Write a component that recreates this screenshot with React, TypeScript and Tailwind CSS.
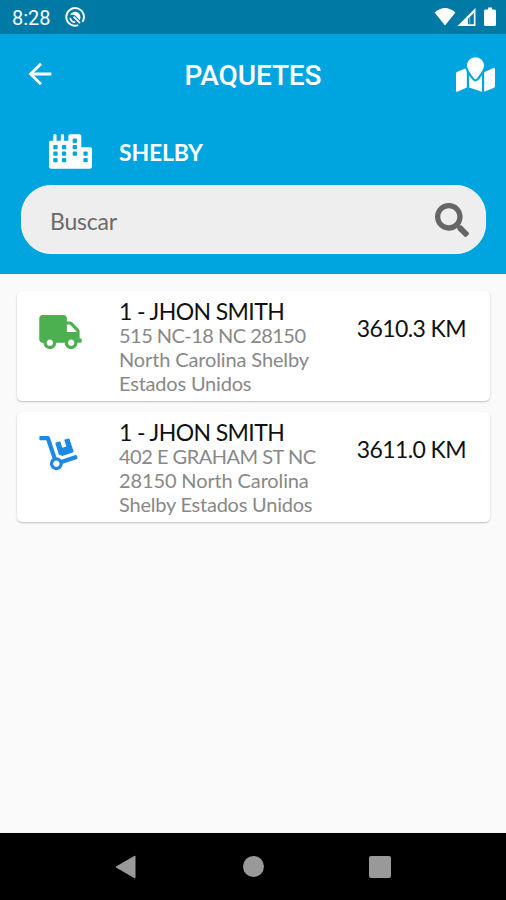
import React from "react";
import { FaCity, FaDolly, FaMapMarked, FaSearch, FaTruck } from "react-icons/fa";
import { MdArrowBack } from "react-icons/md";

interface AddressLine {
  text: string;
  tracking: string;
}

interface PackageItem {
  id: number;
  name: string;
  address: AddressLine[];
  distance: string;
  status: "truck" | "dolly";
}

const packages: PackageItem[] = [
  {
    id: 1,
    name: "1 - JHON SMITH",
    address: [
      { text: "515 NC-18 NC 28150", tracking: "tracking-[-0.53px]" },
      { text: "North Carolina Shelby", tracking: "tracking-[-0.13px]" },
      { text: "Estados Unidos", tracking: "tracking-[-0.2px]" },
    ],
    distance: "3610.3 KM",
    status: "truck",
  },
  {
    id: 2,
    name: "1 - JHON SMITH",
    address: [
      { text: "402 E GRAHAM ST NC", tracking: "tracking-[-0.5px]" },
      { text: "28150 North Carolina", tracking: "tracking-[-0.13px]" },
      { text: "Shelby Estados Unidos", tracking: "tracking-[-0.23px]" },
    ],
    distance: "3611.0 KM",
    status: "dolly",
  },
];

function StatusBar() {
  return (
    <div className="flex h-[34px] items-center bg-[#0079a5] pl-3 pr-[9px] font-['Roboto',sans-serif] text-white">
      <span className="w-[53px] pt-[3px] text-[20px] leading-[31px]">8:28</span>
      <svg className="h-5 w-5" viewBox="0 0 20 20" fill="none">
        <path d="M13.2 18.1A8.8 8.8 0 1 1 17.4 14.8" stroke="white" strokeWidth="1.9" />
        <path d="M5 8.2C6.4 5 10 3.9 12.8 5.6c2.8 1.7 3.2 4.9 2 7.6L11 9.2C9.3 7.6 7 7.4 5 8.2Z" fill="white" />
        <path d="M5.2 10.8c.5 2.6 2.4 4.2 5 4.4M8.6 9.6l6.4 6.6" stroke="white" strokeWidth="1.7" />
      </svg>
      <div className="ml-auto flex items-center">
        <svg className="mr-px h-5 w-[22px]" viewBox="0 0 22 20">
          <path d="M.6 5.6Q11-3.4 21.4 5.6L11 18.6Z" fill="white" />
        </svg>
        <svg className="h-5 w-[19px]" viewBox="0 0 19 20">
          <path d="M18.5 1v18H.5ZM16.8 6 11 11.8v5.5h5.8Z" fill="white" fillRule="evenodd" />
          <path d="M12.8 10.3v6.8" stroke="white" strokeWidth="1" opacity="0.5" />
        </svg>
        <svg className="ml-2 mr-px h-5 w-3" viewBox="0 0 12 20">
          <path
            d="M4 .5h4v2h2.5A1.5 1.5 0 0 1 12 4v13.5a1.5 1.5 0 0 1-1.5 1.5h-9A1.5 1.5 0 0 1 0 17.5V4a1.5 1.5 0 0 1 1.5-1.5H4Z"
            fill="white"
          />
        </svg>
      </div>
    </div>
  );
}

function Header() {
  return (
    <header className="h-[240px] bg-[#00a5df] text-white">
      <div className="flex h-[81px] items-center pl-[23px] pr-[11px]">
        <button type="button" className="w-[39px]">
          <MdArrowBack className="mb-px h-[34px] w-[34px]" />
        </button>
        <h1 className="flex-1 pr-[12px] pt-[2px] text-center font-['Roboto',sans-serif] text-[28px] font-medium tracking-[-0.1px]">
          PAQUETES
        </h1>
        <button type="button">
          <FaMapMarked className="h-[35px] w-[39px]" />
        </button>
      </div>
      <div className="flex h-[70px] items-center pl-[49px] pt-[3px]">
        <FaCity className="h-[35px] w-[43px]" />
        <span className="ml-[27px] pt-px text-[23px] font-bold tracking-[-0.2px]">SHELBY</span>
      </div>
      <div className="ml-[21px] mr-5 flex h-[69px] items-center justify-between rounded-[30px] border border-white bg-[#eee] pl-7 pr-4 pt-px">
        <input
          type="text"
          placeholder="Buscar"
          className="w-60 bg-transparent pt-[2px] text-[23px] tracking-[-0.2px] text-[#666] outline-none placeholder:text-[#6a6a6a]"
        />
        <FaSearch className="h-[34px] w-[34px] text-[#666]" />
      </div>
    </header>
  );
}

function PackageCard({ item }: { item: PackageItem }) {
  return (
    <li className="flex h-[110px] rounded-[5px] bg-white shadow-[0_1px_2px_rgba(0,0,0,0.24)]">
      <div className="w-[102px] pl-[22px] pt-6">
        {item.status === "truck" ? (
          <FaTruck className="h-[34px] w-[43px] text-[#4caf50]" />
        ) : (
          <FaDolly className="h-[34px] w-[39px] text-[#1e88e5]" />
        )}
      </div>
      <div className="flex-1 whitespace-nowrap pt-[7px]">
        <p className="text-[23px] leading-[26px] tracking-[-0.6px] text-[#111]">{item.name}</p>
        <div className="-mt-px text-[20px] leading-6 text-[#888]">
          {item.address.map((line) => (
            <p key={line.text} className={line.tracking}>
              {line.text}
            </p>
          ))}
        </div>
      </div>
      <p className="whitespace-nowrap pr-6 pt-[23px] text-[23px] leading-7 tracking-[-0.6px] text-[#111]">
        {item.distance}
      </p>
    </li>
  );
}

function NavigationBar() {
  return (
    <nav className="flex h-[67px] items-center justify-between bg-black px-[115px]">
      <svg className="h-6 w-[22px]" viewBox="0 0 22 24">
        <path d="M1 12 20 1v22Z" fill="#999" stroke="#999" strokeLinejoin="round" />
      </svg>
      <div className="h-[21px] w-[21px] rounded-full bg-[#999]" />
      <div className="h-[22px] w-[22px] rounded-[2px] bg-[#999]" />
    </nav>
  );
}

export default function App() {
  return (
    <div className="flex h-[900px] w-[506px] flex-col overflow-hidden bg-[#fafafa] font-['Lato',sans-serif]">
      <StatusBar />
      <Header />
      <main className="flex-1">
        <ul className="flex flex-col gap-[11px] pl-[17px] pr-4 pt-[17px]">
          {packages.map((item) => (
            <PackageCard key={item.id} item={item} />
          ))}
        </ul>
      </main>
      <NavigationBar />
    </div>
  );
}
